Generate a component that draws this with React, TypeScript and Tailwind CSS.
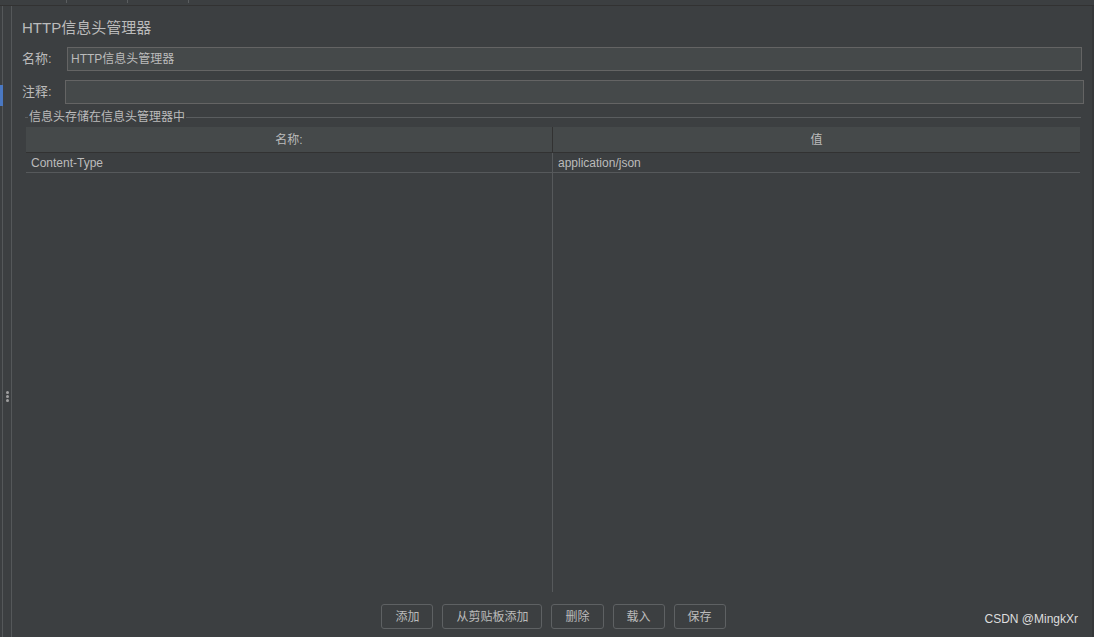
const cjk = { fontFamily: '"Liberation Sans", "Noto Sans CJK SC", sans-serif' };

const buttons = ['添加', '从剪贴板添加', '删除', '载入', '保存'];

const App = () => {
    return (
        <div className="relative flex h-[637px] w-[1094px] flex-col overflow-hidden bg-[#3c3f41] text-[#bbbbbb]" style={cjk}>
            {/* top tab strip */}
            <div className="flex h-[6px] shrink-0 border-b border-[#323232] bg-[#3c3f41]">
                <div className="ml-[66px] h-[3px] w-px bg-[#5a5d5f]" />
                <div className="ml-[60px] h-[3px] w-px bg-[#5a5d5f]" />
                <div className="ml-[60px] h-[3px] w-px bg-[#5a5d5f]" />
            </div>

            <div className="flex min-h-0 flex-1">
                {/* left splitter */}
                <div className="relative flex w-[13px] shrink-0">
                    <div className="ml-[2px] w-px bg-[#55585a]" />
                    <div className="ml-[8px] w-px bg-[#55585a]" />
                    <div className="absolute left-0 top-[79px] h-[21px] w-[3px] bg-[#4a78c2]" />
                    <div className="absolute left-[6px] top-[385px] flex flex-col gap-[1px]">
                        <div className="h-[3px] w-[3px] rounded-full bg-[#a0a0a0]" />
                        <div className="h-[3px] w-[3px] rounded-full bg-[#a0a0a0]" />
                        <div className="h-[3px] w-[3px] rounded-full bg-[#a0a0a0]" />
                    </div>
                </div>

                <div className="flex min-w-0 flex-1 flex-col pl-[9px] pr-[10px]">
                    <div className="mt-[12px] h-[20px] text-[15px] leading-[20px] text-[#bbbbbb]">HTTP信息头管理器</div>

                    <div className="mt-[9px] flex h-[24px] items-center">
                        <span className="w-[45px] text-[13px]">名称:</span>
                        <div className="flex h-[24px] flex-1 items-center border border-[#646464] bg-[#45494a] pl-[3px] text-[12px] text-[#bbbbbb]">
                            HTTP信息头管理器
                        </div>
                    </div>

                    <div className="mt-[9px] flex h-[24px] items-center">
                        <span className="w-[43px] text-[13px]">注释:</span>
                        <div className="mr-[-2px] h-[24px] flex-1 border border-[#646464] bg-[#45494a]" />
                    </div>

                    {/* group box */}
                    <div className="relative mt-[6px] flex min-h-0 flex-1 flex-col pl-[3px]">
                        <div className="flex h-[14px] items-center">
                            <div className="h-px w-[3px] bg-[#5a5d5f]" />
                            <span className="px-[1px] text-[12px] leading-[14px]">信息头存储在信息头管理器中</span>
                            <div className="mr-[1px] h-px flex-1 bg-[#5a5d5f]" />
                        </div>

                        <div className="mt-[3px] flex min-h-0 flex-1 flex-col pl-px pr-[2px]">
                            <div className="flex h-[26px] border-b border-[#323232] bg-[#45494a] text-[12px]">
                                <div className="flex w-[527px] items-center justify-center border-r border-[#323232]">名称:</div>
                                <div className="flex flex-1 items-center justify-center">值</div>
                            </div>
                            <div className="flex min-h-0 flex-1">
                                <div className="flex w-[527px] flex-col border-r border-[#56595b]">
                                    <div className="flex h-[20px] items-center border-b border-[#56595b] pl-[5px] text-[12px]">Content-Type</div>
                                </div>
                                <div className="flex flex-1 flex-col">
                                    <div className="flex h-[20px] items-center border-b border-[#56595b] pl-[5px] text-[12px]">application/json</div>
                                </div>
                            </div>
                        </div>

                        <div className="flex h-[45px] shrink-0 items-center justify-center gap-[9px] pt-[4px]">
                            {buttons.map((b) => (
                                <div
                                    key={b}
                                    className="flex h-[25px] items-center justify-center rounded-[3px] border border-[#5e6163] bg-[#3c3f41] px-[13px] text-[12px] text-[#bbbbbb]"
                                >
                                    {b}
                                </div>
                            ))}
                        </div>
                    </div>
                </div>

                <div className="w-[2px] shrink-0 bg-[#353739]" />
            </div>

            <div className="absolute bottom-[9px] right-[16px] text-[12px] text-[#dddddd]" style={{ fontFamily: '"Liberation Sans", sans-serif' }}>
                CSDN @MingkXr
            </div>
        </div>
    );
};

export default App;
